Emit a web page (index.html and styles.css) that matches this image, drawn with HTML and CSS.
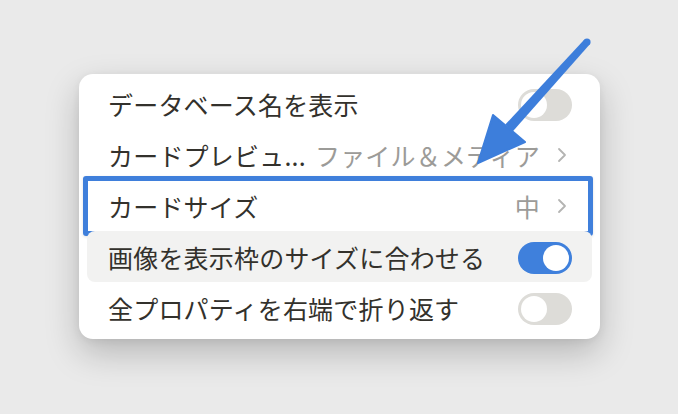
FILE: index.html
```html
<!DOCTYPE html>
<html lang="ja">
<head>
<meta charset="utf-8">
<link rel="stylesheet" href="styles.css">
</head>
<body>
<div class="stage">
  <div class="card">
    <div class="row">
      <span class="label">データベース名を表示</span>
      <span class="toggle off"><span class="knob"></span></span>
    </div>
    <div class="row">
      <span class="label">カードプレビュ...</span>
      <span class="value">ファイル＆メディア</span>
      <svg class="chev" width="12" height="18" viewBox="0 0 12 18"><polyline points="3,3 9,9 3,15" fill="none" stroke="#b4b4b2" stroke-width="1.8" stroke-linecap="round" stroke-linejoin="round"/></svg>
    </div>
    <div class="row boxed">
      <span class="label">カードサイズ</span>
      <span class="value">中</span>
      <svg class="chev" width="12" height="18" viewBox="0 0 12 18"><polyline points="3,3 9,9 3,15" fill="none" stroke="#b4b4b2" stroke-width="1.8" stroke-linecap="round" stroke-linejoin="round"/></svg>
      <span class="focus-box"></span>
    </div>
    <div class="row hover">
      <span class="label">画像を表示枠のサイズに合わせる</span>
      <span class="toggle on"><span class="knob"></span></span>
    </div>
    <div class="row">
      <span class="label">全プロパティを右端で折り返す</span>
      <span class="toggle off"><span class="knob"></span></span>
    </div>
  </div>
  <svg class="arrow" width="678" height="414" viewBox="0 0 678 414">
    <polygon points="589.6,44.4 584.4,39.6 505.3,124.6 512.7,131.4" fill="#3d7edb"/>
    <circle cx="587" cy="42" r="3.6" fill="#3d7edb"/>
    <polygon points="478,163 493,115 525,142" fill="#3d7edb" stroke="#3d7edb" stroke-width="2" stroke-linejoin="round"/>
  </svg>
</div>
</body>
</html>
```
FILE: styles.css
```css
* { box-sizing: border-box; }
html, body {
  margin: 0;
  padding: 0;
  width: 678px;
  height: 414px;
  overflow: hidden;
  background: #eaeaea;
  font-family: "Noto Sans CJK JP", "Noto Sans", sans-serif;
}
.stage {
  position: relative;
  width: 678px;
  height: 414px;
  padding: 74px 0 0 79px;
}
.card {
  position: relative;
  width: 521px;
  height: 265px;
  background: #fff;
  border-radius: 14px;
  padding: 4px 8px 6px;
  box-shadow: 0 14px 34px rgba(0, 0, 0, 0.22), 0 2px 8px rgba(0, 0, 0, 0.06);
}
.card::before {
  content: "";
  position: absolute;
  left: -4px;
  right: -3px;
  top: 14px;
  bottom: 10px;
  border-radius: 14px;
  background: #f4f4f4;
  border: 1px solid #dadada;
  z-index: -1;
}
.row {
  position: relative;
  display: flex;
  align-items: center;
  height: 51px;
  padding: 0 20px 0 21px;
  color: #33312c;
  font-size: 25px;
  letter-spacing: 0.2px;
  border-radius: 8px;
}
.label { flex: 1; white-space: nowrap; }
.value {
  color: #9c9b98;
  margin-right: 16px;
  white-space: nowrap;
}
.chev { display: block; margin-right: 4px; }
.row.hover { background: #f2f2f1; }
.focus-box {
  position: absolute;
  left: -4px;
  right: -1px;
  top: -4px;
  bottom: -5px;
  border: 5px solid #3f7fdb;
  border-radius: 3px;
  box-shadow: 0 1px 3px rgba(0, 0, 0, 0.12);
  pointer-events: none;
}
.toggle {
  position: relative;
  display: block;
  width: 54px;
  height: 32px;
  border-radius: 16px;
  background: #dddcd8;
  margin-top: 3px;
}
.toggle.on { background: #3f80dc; }
.knob {
  position: absolute;
  top: 3px;
  left: 3px;
  width: 26px;
  height: 26px;
  border-radius: 50%;
  background: #fff;
}
.toggle.on .knob { left: 25px; }
.arrow {
  position: absolute;
  left: 0;
  top: 0;
}
```
